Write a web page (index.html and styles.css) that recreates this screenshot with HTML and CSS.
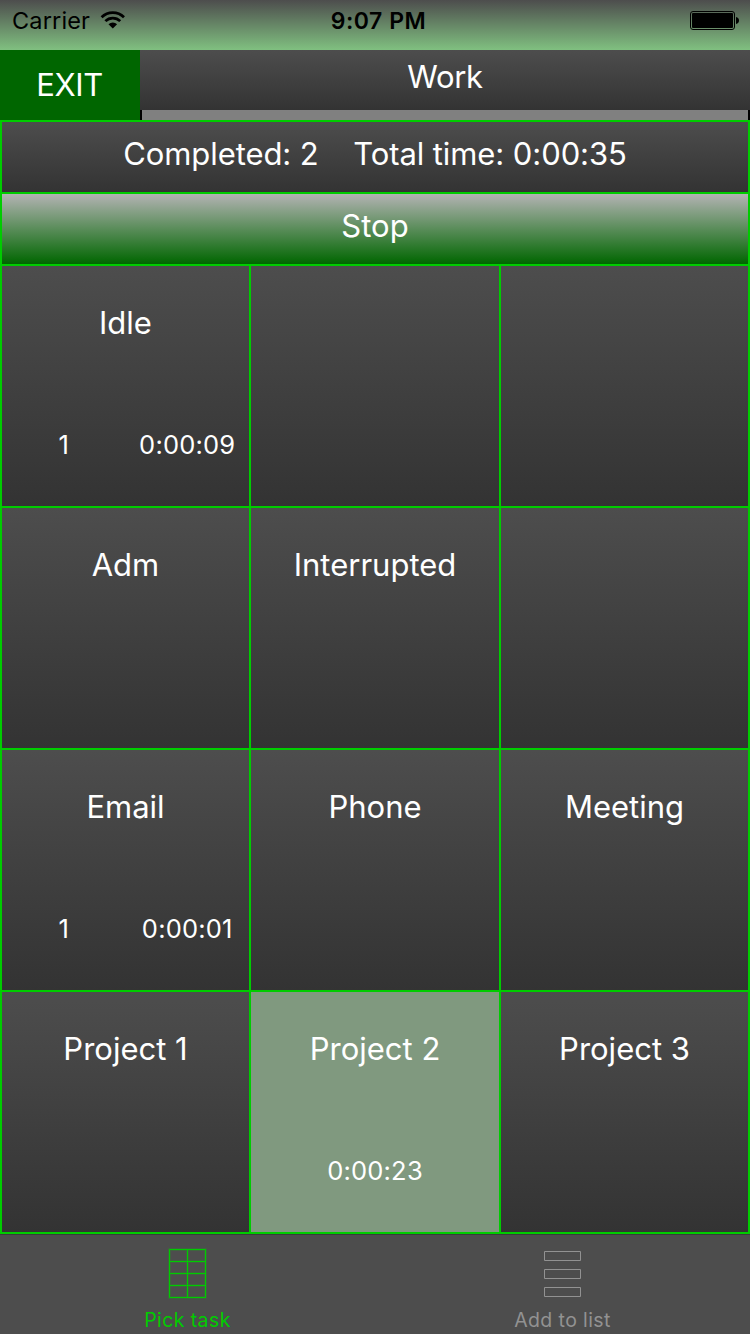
FILE: index.html
```html
<!DOCTYPE html>
<html lang="en">
<head>
<meta charset="utf-8">
<title>Work</title>
<link rel="stylesheet" href="styles.css">
</head>
<body>
<div class="app">
  <div class="status">
    <div class="status-left">
      <span class="carrier">Carrier</span>
      <svg class="wifi" width="26" height="20" viewBox="0 0 26 20">
        <g fill="none" stroke="#000" stroke-width="2.7">
          <path d="M1.6 7.2a15.8 15.8 0 0 1 22.4 0"/>
          <path d="M5.4 11.1a10.5 10.5 0 0 1 14.8 0"/>
        </g>
        <path d="M8.5 14.2a6.2 6.2 0 0 1 8.6 0l-4.3 4.4z"/>
      </svg>
    </div>
    <span class="clock">9:07 PM</span>
    <svg class="battery" width="50" height="20" viewBox="0 0 50 20">
      <rect x=".5" y=".5" width="44" height="18" rx="2.5" fill="none" stroke="#000"/>
      <rect x="2" y="2" width="41" height="15" rx="1"/>
      <path d="M46 6c2 .4 3 1.8 3 3.5s-1 3.100-3 3.500z"/>
    </svg>
  </div>
  <div class="header">
    <div class="exit">EXIT</div>
    <div class="heading">
      <div class="title">Work</div>
      <div class="progress"></div>
    </div>
  </div>
  <div class="board">
    <div class="summary"><span>Completed: 2</span><span>Total time: 0:00:35</span></div>
    <div class="stop">Stop</div>
    <div class="grid">
      <div class="cell"><div class="name">Idle</div><div class="stats"><span class="stat">1</span><span class="stat">0:00:09</span></div></div>
      <div class="cell"></div>
      <div class="cell"></div>
      <div class="cell"><div class="name">Adm</div></div>
      <div class="cell"><div class="name">Interrupted</div></div>
      <div class="cell"></div>
      <div class="cell"><div class="name">Email</div><div class="stats"><span class="stat">1</span><span class="stat">0:00:01</span></div></div>
      <div class="cell"><div class="name">Phone</div></div>
      <div class="cell"><div class="name">Meeting</div></div>
      <div class="cell"><div class="name">Project 1</div></div>
      <div class="cell active"><div class="name">Project 2</div><div class="stats"><span class="stat">0:00:23</span></div></div>
      <div class="cell"><div class="name">Project 3</div></div>
    </div>
  </div>
  <div class="tabs">
    <div class="tab selected">
      <svg class="icon" width="39" height="52" viewBox="-1 0 39 52">
        <path class="grid-glow" d="M.5 1.500h36v48H.5zM18.500 1.500v48M.5 13.500h36M.5 25.500h36M.5 37.500h36"/>
        <path class="grid-lines" d="M.5 1.500h36v48H.5zM18.500 1.500v48M.5 13.500h36M.5 25.500h36M.5 37.500h36"/>
      </svg>
      <span class="label">Pick task</span>
    </div>
    <div class="tab">
      <svg class="icon" width="38" height="52" viewBox="0 0 38 52">
        <path class="list-lines" d="M.5 3.500h36v9H.5zM.5 21.500h36v9H.5zM.5 39.500h36v9H.5z"/>
      </svg>
      <span class="label">Add to list</span>
    </div>
  </div>
</div>
</body>
</html>
```
FILE: styles.css
```css
* { box-sizing: border-box; }
body { margin: 0; font-family: Inter, "Liberation Sans", sans-serif; color: #fff; }
.app { width: 750px; height: 1334px; display: flex; flex-direction: column; overflow: hidden; background: #000; }
.status { height: 50px; display: grid; grid-template-columns: 1fr auto 1fr; padding: 0 10px 0 12px; background: linear-gradient(#4d4d4d, #80c080); color: #000; line-height: 42px; font-size: 23.5px; }
.status-left { display: flex; gap: 10px; }
.carrier { letter-spacing: .15px; }
.wifi { margin-top: 10px; }
.clock { font-weight: 600; font-size: 23px; letter-spacing: .5px; padding-left: 5px; }
.battery { margin-top: 11px; justify-self: end; }
.header { height: 70px; display: flex; font-size: 31px; }
.exit { width: 140px; height: 70px; padding-right: 1px; background: #060; line-height: 70px; text-align: center; letter-spacing: -.4px; }
.heading { flex: 1; }
.title { height: 60px; line-height: 54px; text-align: center; letter-spacing: -.3px; background: linear-gradient(#4d4d4d, #333); }
.progress { height: 10px; margin: 0 2px; background: #808080; }
.board { height: 1114px; padding: 2px; display: grid; grid-template-rows: 70px 70px 1fr; gap: 2px; background: #0c0; font-size: 31px; }
.summary { display: flex; justify-content: center; gap: 34.5px; line-height: 64px; letter-spacing: -.08px; background: linear-gradient(#4d4d4d, #333); }
.stop { text-align: center; line-height: 64px; background: linear-gradient(#b3b3b3, #060); }
.grid { display: grid; grid-template-columns: 247px 248px 247px; grid-template-rows: repeat(4, 240px); gap: 2px; }
.cell { padding-top: 37px; background: linear-gradient(#4d4d4d, #333); }
.active { background: #80997f; }
.name { height: 40px; line-height: 40px; text-align: center; }
.stats { display: flex; margin-top: 82px; height: 40px; line-height: 40px; font-size: 25.5px; letter-spacing: .2px; }
.stat { flex: 1; text-align: center; }
.tabs { height: 100px; display: grid; grid-template-columns: 1fr 1fr; background: #4d4d4d; border-top: 1px solid #3a3a3a; color: #929292; }
.tab { display: flex; flex-direction: column; align-items: center; padding-top: 13px; }
.selected { color: #0c0; }
.icon { height: 52px; }
.grid-lines { fill: none; stroke: #00cc00; stroke-width: 1px; }
.grid-glow { fill: none; stroke: #00cc00; stroke-opacity: .2; stroke-width: 3px; }
.list-lines { fill: none; stroke: #929292; stroke-width: 1px; }
.label { font-size: 19.500px; line-height: 28px; margin-top: 6px; letter-spacing: .4px; }
```
